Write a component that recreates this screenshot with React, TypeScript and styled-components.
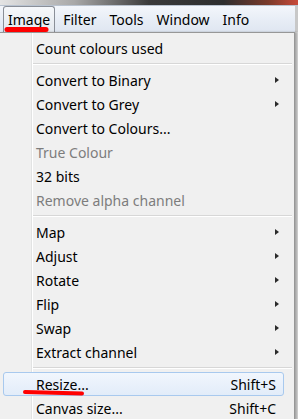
import React from 'react'
import styled, { createGlobalStyle } from 'styled-components'

const GlobalStyle = createGlobalStyle`
  html, body {
    margin: 0;
    padding: 0;
    background: #dcdcdc;
  }
  body {
    width: 298px;
    height: 419px;
    overflow: hidden;
    font-family: 'Noto Sans', 'Open Sans', sans-serif;
  }
`

type Entry =
  | { kind: 'item'; label: string; sub?: boolean; disabled?: boolean; shortcut?: string; active?: boolean }
  | { kind: 'sep' }

const entries: Entry[] = [
  { kind: 'item', label: 'Count colours used' },
  { kind: 'sep' },
  { kind: 'item', label: 'Convert to Binary', sub: true },
  { kind: 'item', label: 'Convert to Grey', sub: true },
  { kind: 'item', label: 'Convert to Colours...' },
  { kind: 'item', label: 'True Colour', disabled: true },
  { kind: 'item', label: '32 bits' },
  { kind: 'item', label: 'Remove alpha channel', disabled: true },
  { kind: 'sep' },
  { kind: 'item', label: 'Map', sub: true },
  { kind: 'item', label: 'Adjust', sub: true },
  { kind: 'item', label: 'Rotate', sub: true },
  { kind: 'item', label: 'Flip', sub: true },
  { kind: 'item', label: 'Swap', sub: true },
  { kind: 'item', label: 'Extract channel', sub: true },
  { kind: 'sep' },
  { kind: 'item', label: 'Resize...', shortcut: 'Shift+S', active: true },
  { kind: 'item', label: 'Canvas size...', shortcut: 'Shift+C' },
]

const menus = ['Image', 'Filter', 'Tools', 'Window', 'Info']

export default function App() {
  return (
    <>
      <GlobalStyle />
      <Screen>
        <DesktopStrip />
        <MenuBar>
          {menus.map((m, i) => (
            <MenuTitle key={m} open={i === 0}>
              {m}
            </MenuTitle>
          ))}
        </MenuBar>
        <Dropdown>
          {entries.map((e, i) =>
            e.kind === 'sep' ? (
              <Separator key={i} />
            ) : (
              <Item key={i} active={e.active} disabled={e.disabled}>
                <Label>{e.label}</Label>
                {e.shortcut && <Shortcut>{e.shortcut}</Shortcut>}
                {e.sub && <Arrow />}
              </Item>
            )
          )}
        </Dropdown>
        <Marks width="298" height="419" viewBox="0 0 298 419">
          <path d="M7 29.5 L46 29.5" stroke="#ff0000" strokeWidth="5" strokeLinecap="round" />
          <path d="M25 392 L82 393.5" stroke="#ff0000" strokeWidth="4" strokeLinecap="round" />
        </Marks>
      </Screen>
    </>
  )
}

const Screen = styled.div`
  position: relative;
  width: 298px;
  height: 419px;
  overflow: hidden;
  display: flex;
  flex-direction: column;
`

const DesktopStrip = styled.div`
  height: 5px;
  flex: none;
  background: linear-gradient(to right, #e4e4e4 0%, #a8a8a8 25%, #3a3a3a 50%, #2e2e2e 75%, #7a3a2a 90%, #c84a3a 100%);
  border-bottom: 1px solid #b9c3d0;
`

const MenuBar = styled.div`
  height: 26px;
  flex: none;
  display: flex;
  align-items: stretch;
  padding-left: 3px;
  background: linear-gradient(to bottom, #f3f6fb 0%, #e6ecf5 60%, #dfe6f1 100%);
  border-right: 3px solid #c8c8c8;
`

const MenuTitle = styled.div<{ open?: boolean }>`
  display: flex;
  align-items: center;
  padding: 0 4px 1px 4px;
  margin-right: 3px;
  font-size: 14px;
  color: #000;
  border: 1px solid ${({ open }) => (open ? '#8a8f98' : 'transparent')};
  border-bottom: none;
  border-radius: 3px 3px 0 0;
  background: ${({ open }) =>
    open ? 'linear-gradient(to bottom, #f6f8fb 0%, #e3e8ee 100%)' : 'transparent'};
`

const Dropdown = styled.div`
  flex: 1;
  width: 294px;
  padding-top: 3px;
  border-top: 1px solid #979797;
  border-right: 1px solid #979797;
  box-shadow: 2px 0 2px rgba(0, 0, 0, 0.25);
  background:
    linear-gradient(to right, transparent 31px, #e2e3e3 31px, #e2e3e3 32px, #ffffff 32px, #ffffff 33px, transparent 33px),
    #f0f0f0;
  display: flex;
  flex-direction: column;
`

const Item = styled.div<{ active?: boolean; disabled?: boolean }>`
  position: relative;
  height: 24px;
  flex: none;
  box-sizing: border-box;
  display: flex;
  align-items: center;
  margin: 0 10px 0 3px;
  padding: 0 7px 0 32px;
  font-size: 14px;
  color: ${({ disabled }) => (disabled ? '#7d7d7d' : '#000')};
  border: 1px solid ${({ active }) => (active ? '#a8c9ee' : 'transparent')};
  border-radius: 3px;
  background: ${({ active }) =>
    active ? 'linear-gradient(to bottom, #f1f6fd 0%, #e2ecf9 100%)' : 'transparent'};
`

const Label = styled.span`
  flex: 1;
  white-space: nowrap;
`

const Shortcut = styled.span`
  white-space: nowrap;
`

const Arrow = styled.span`
  width: 0;
  height: 0;
  margin-right: -3px;
  border-top: 3.5px solid transparent;
  border-bottom: 3.5px solid transparent;
  border-left: 4px solid #2b2b2b;
`

const Separator = styled.div`
  height: 8px;
  flex: none;
  margin-left: 33px;
  margin-right: 2px;
  box-sizing: border-box;
  padding-top: 3px;
  &::before {
    content: '';
    display: block;
    height: 1px;
    background: #d7d7d7;
    border-bottom: 1px solid #ffffff;
  }
`

const Marks = styled.svg`
  position: absolute;
  left: 0;
  top: 0;
  pointer-events: none;
`
